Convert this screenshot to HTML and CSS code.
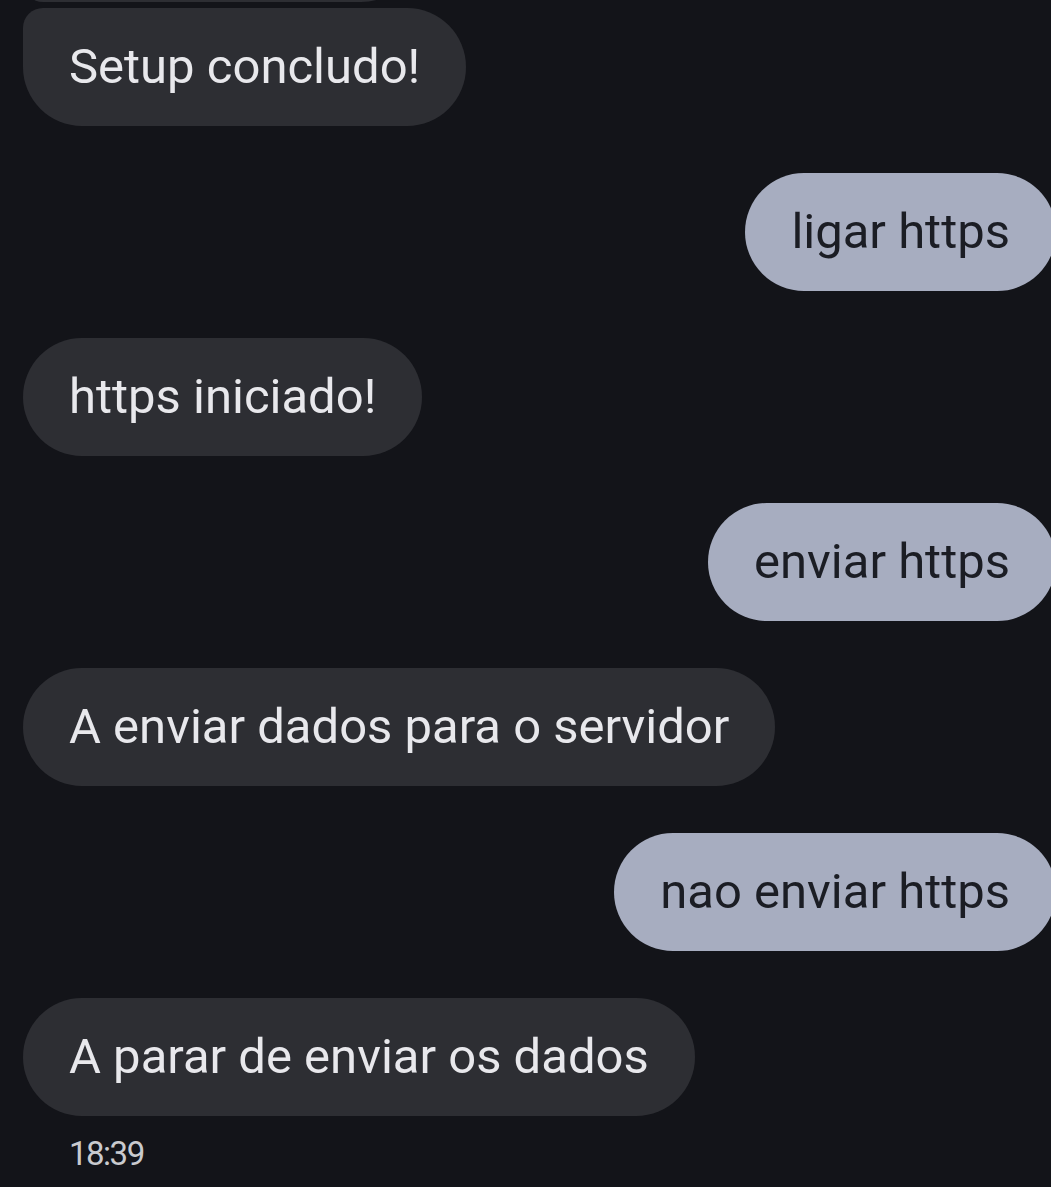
FILE: index.html
```html
<!DOCTYPE html>
<html lang="pt">
<head>
<meta charset="utf-8">
<link rel="stylesheet" href="styles.css">
</head>
<body>
<main class="thread">
  <div class="msg in stub"><div class="bubble">&nbsp;</div></div>
  <div class="msg in grouped"><div class="bubble">Setup concludo!</div></div>
  <div class="msg out"><div class="bubble">ligar https</div></div>
  <div class="msg in"><div class="bubble">https iniciado!</div></div>
  <div class="msg out"><div class="bubble">enviar https</div></div>
  <div class="msg in"><div class="bubble">A enviar dados para o servidor</div></div>
  <div class="msg out"><div class="bubble">nao enviar https</div></div>
  <div class="msg in last"><div class="bubble">A parar de enviar os dados</div></div>
  <div class="time">18:39</div>
</main>
</body>
</html>
```
FILE: styles.css
```css
html, body {
  margin: 0;
  padding: 0;
  background: #131419;
  overflow: hidden;
}
.thread {
  display: flex;
  flex-direction: column;
  padding: 0 0 0 23px;
  font-family: Roboto, "Noto Sans", sans-serif;
}
.msg {
  display: flex;
  margin-top: 47px;
}
.msg.stub {
  margin-top: -116px;
}
.msg.grouped {
  margin-top: 6px;
}
.msg.in { justify-content: flex-start; }
.msg.out { justify-content: flex-end; margin-right: -5px; }
.bubble {
  box-sizing: border-box;
  height: 118px;
  padding: 0 46px;
  display: flex;
  align-items: center;
  font-size: 49px;
  line-height: 56px;
  border-radius: 59px;
  white-space: nowrap;
}
.msg.in .bubble {
  background: #2d2e33;
  color: #e8e8ec;
}
.msg.out .bubble {
  background: #a7adc0;
  color: #1b1d24;
}
.msg.stub .bubble {
  width: 397px;
  border-radius: 59px 59px 59px 20px;
}
.msg.grouped .bubble {
  border-radius: 20px 59px 59px 59px;
}
.time {
  margin: 18px 0 0 46px;
  font-size: 33px;
  line-height: 40px;
  letter-spacing: -1.5px;
  color: #c9cace;
}
```
